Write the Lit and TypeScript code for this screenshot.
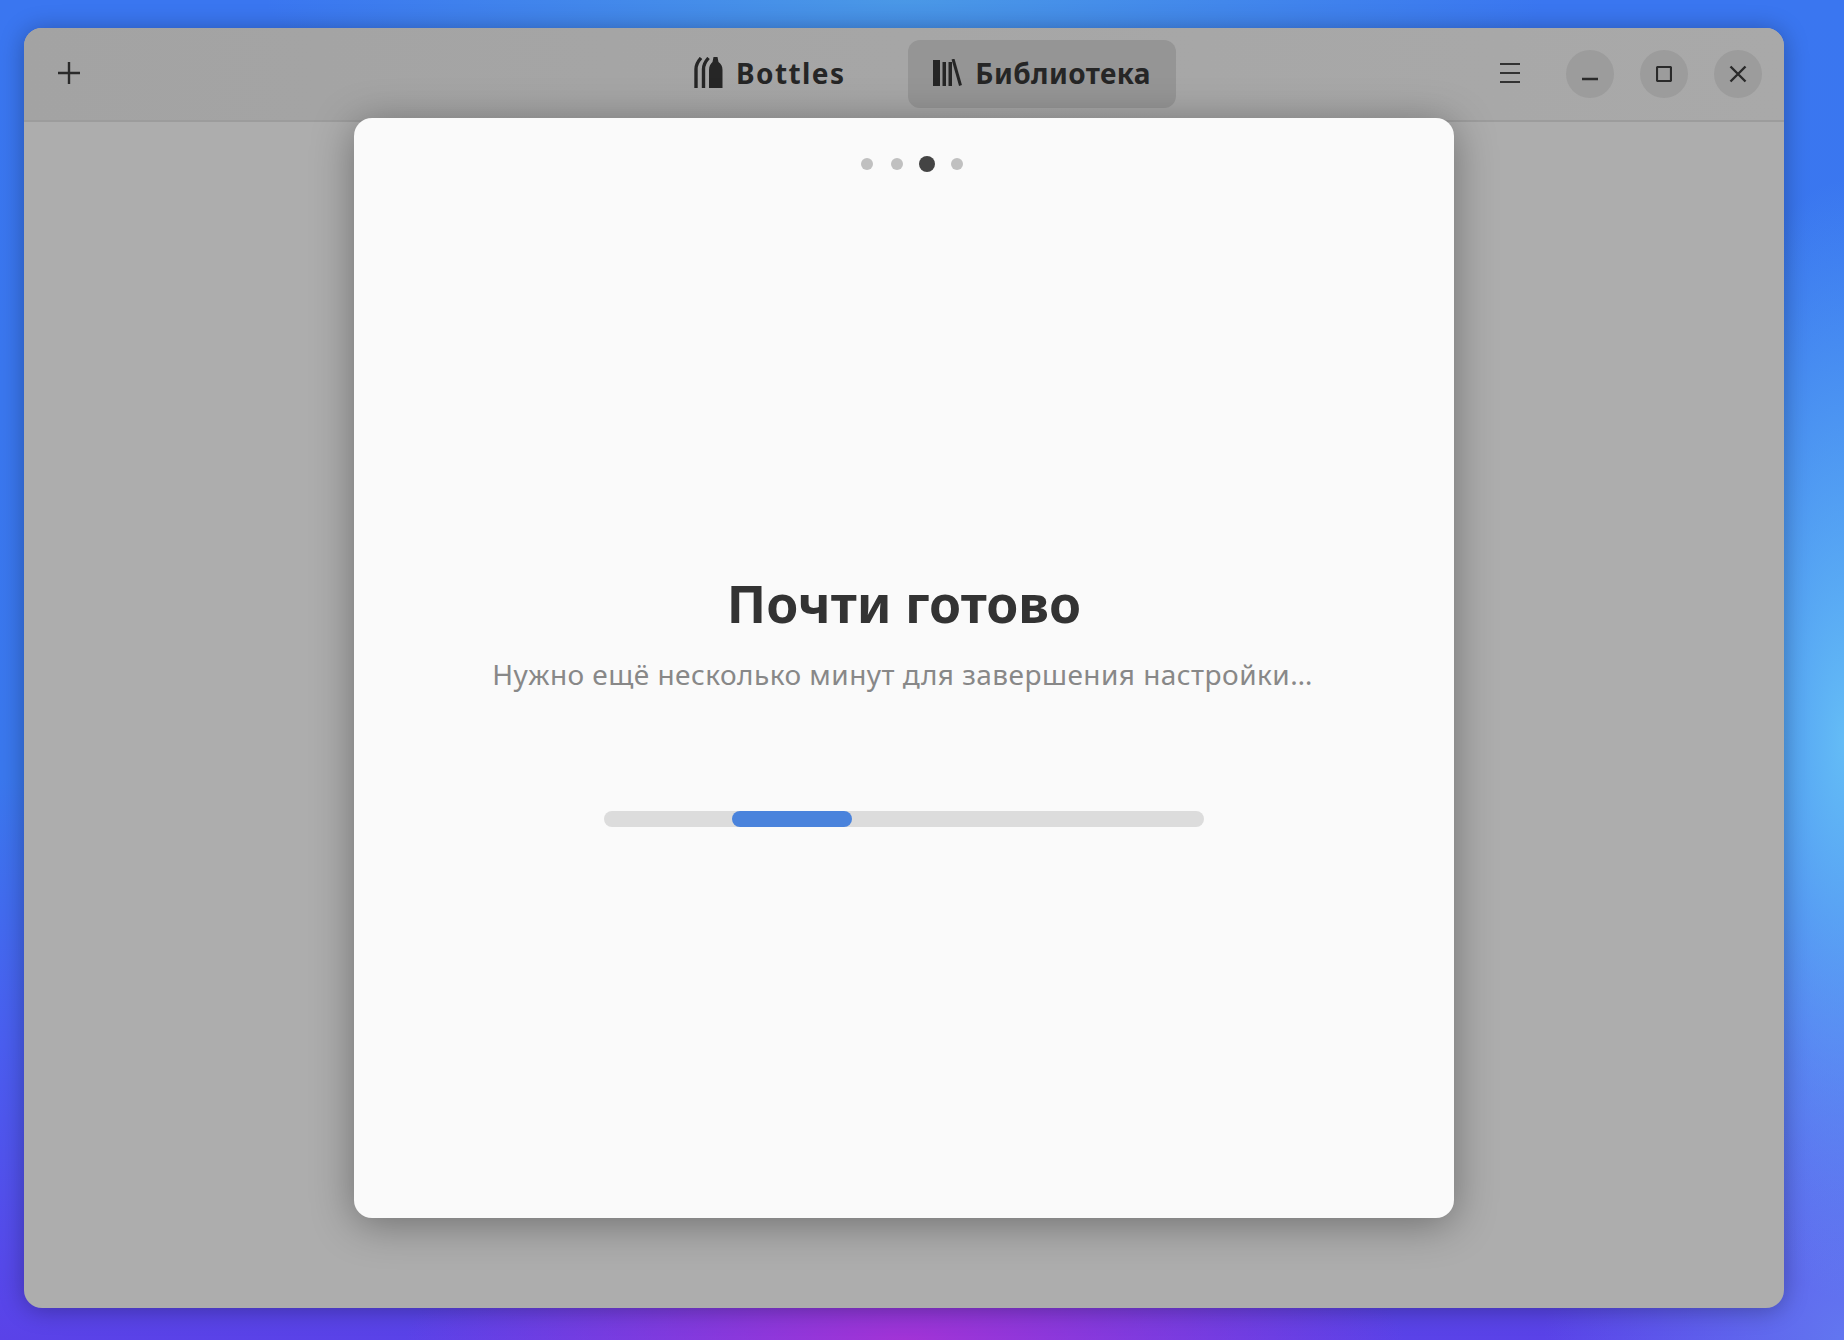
import { LitElement, html, css } from "lit";
import { customElement } from "lit/decorators.js";

@customElement("app-root")
export class AppRoot extends LitElement {
  static styles = css`
    :host { display: block; width: 1844px; height: 1340px; overflow: hidden; font-family: "Noto Sans", "Open Sans", sans-serif; }
    .desk { width: 1844px; height: 1340px; box-sizing: border-box; padding: 28px 60px 32px 24px;
      background:
        radial-gradient(ellipse 500px 130px at 905px 1340px, #a233d6 0%, rgba(162,51,214,0) 100%),
        radial-gradient(ellipse 170px 560px at 1844px 740px, #64bcf6 0%, rgba(100,188,246,0) 100%),
        radial-gradient(ellipse 640px 110px at 905px 0px, #4a98e6 0%, rgba(74,152,230,0) 100%),
        radial-gradient(ellipse 300px 420px at 1844px 1340px, #6276f0 0%, rgba(98,118,240,0) 100%),
        linear-gradient(180deg, #3a76f0 0%, #3a78ee 58%, #4a5ef0 78%, #5a42e8 100%);
    }
    .win { position: relative; width: 1760px; height: 1280px; border-radius: 18px; background: #adadad; display: flex; flex-direction: column;
      box-shadow: 0 2px 24px rgba(0,0,0,.3); overflow: hidden; }
    .head { height: 94px; flex: none; box-sizing: border-box; background: linear-gradient(90deg, #a3a3a3, #a9a9a9); border-bottom: 2px solid #9c9c9c;
      display: flex; align-items: center; padding: 0 22px 0 34px; }
    .ic { flex: none; display: block; }
    .plus { margin-top: -2px; }
    .tabs { display: flex; gap: 38px; margin-left: 589px; }
    .tab { height: 68px; box-sizing: border-box; display: flex; align-items: center; gap: 13px; padding: 0 25px 3px; border-radius: 12px;
      font-weight: 700; font-size: 28px; color: #262626; }
    .tab.bottles { letter-spacing: 1.4px; }
    .tab.on { background: #959595; letter-spacing: 0.4px; }
    .right { display: flex; align-items: center; gap: 26px; margin-left: auto; }
    .menu { margin-right: 20px; margin-top: -2px; }
    .wbtn { width: 48px; height: 48px; border-radius: 50%; background: #9c9c9c; display: flex; align-items: center; justify-content: center; }
    .dlg { position: absolute; left: 330px; top: 90px; width: 1100px; height: 1100px; border-radius: 18px; background: #fafafa;
      box-shadow: 0 6px 42px rgba(0,0,0,.36); display: flex; flex-direction: column; align-items: center; }
    .dots { display: flex; align-items: center; gap: 18px; height: 18px; margin-top: 37px; transform: translateX(8px); }
    .dot { width: 12px; height: 12px; border-radius: 50%; background: #c0c0c0; }
    .dot.on { width: 16px; height: 16px; background: #444; margin: 0 -2px; }
    h1 { margin: 397px 0 0; font-size: 51.7px; line-height: 66px; font-weight: 700; color: #333; }
    p { margin: 19px 3px 0 0; font-size: 28px; letter-spacing: 0.46px; line-height: 38px; font-weight: 400; color: #888; }
    .bar { width: 600px; height: 16px; margin-top: 118px; border-radius: 8px; background: #dcdcdc; display: flex; }
    .fill { width: 120px; height: 16px; margin-left: 128px; border-radius: 8px; background: #4a83dc; }
  `;

  render() {
    return html`
      <div class="desk">
        <div class="win">
          <div class="head">
            <svg class="ic plus" width="22" height="22" viewBox="0 0 22 22"><path d="M11 0v22M0 11h22" stroke="#2a2a2a" stroke-width="2.4" fill="none"/></svg>
            <div class="tabs">
              <div class="tab bottles">
                <svg class="ic" width="29" height="31" viewBox="0 0 29 31"><path d="M7 1C3.500 5 2 8 2 12v19M14.500 1C11 5 9.500 8 9.500 12v19" stroke="#262626" stroke-width="3.400" fill="none"/><path d="M19.500 0h4l1 5c2.500 2 4 4 4 8v18H15V13c0-4 1.500-6 3.500-8z" fill="#262626"/></svg>
                <span>Bottles</span>
              </div>
              <div class="tab on">
                <svg class="ic" width="29" height="27" viewBox="0 0 29 27"><path d="M0 1h7v26H0zM9.500 3h3.500v24H9.500zM15.500 3h3.500v24h-3.500z" fill="#262626"/><path d="M20 0l7.500 26.500" stroke="#262626" stroke-width="3" fill="none"/></svg>
                <span>Библиотека</span>
              </div>
            </div>
            <div class="right">
              <svg class="ic menu" width="20" height="20" viewBox="0 0 20 20"><path d="M0 1h20M0 10h20M0 19h20" stroke="#333" stroke-width="2.200" fill="none"/></svg>
              <div class="wbtn"><svg class="ic" width="16" height="16" viewBox="0 0 16 16"><path d="M0 13h16" stroke="#2a2a2a" stroke-width="2.400" fill="none"/></svg></div>
              <div class="wbtn"><svg class="ic" width="16" height="16" viewBox="0 0 16 16"><rect x="1" y="1" width="14" height="14" stroke="#2a2a2a" stroke-width="2.200" fill="none" rx="1"/></svg></div>
              <div class="wbtn"><svg class="ic" width="18" height="18" viewBox="0 0 18 18"><path d="M1.500 1.500l15 15M16.500 1.500l-15 15" stroke="#2a2a2a" stroke-width="2.400" fill="none"/></svg></div>
            </div>
          </div>
          <div class="dlg">
            <div class="dots"><div class="dot"></div><div class="dot"></div><div class="dot on"></div><div class="dot"></div></div>
            <h1>Почти готово</h1>
            <p>Нужно ещё несколько минут для завершения настройки…</p>
            <div class="bar"><div class="fill"></div></div>
          </div>
        </div>
      </div>
    `;
  }
}
